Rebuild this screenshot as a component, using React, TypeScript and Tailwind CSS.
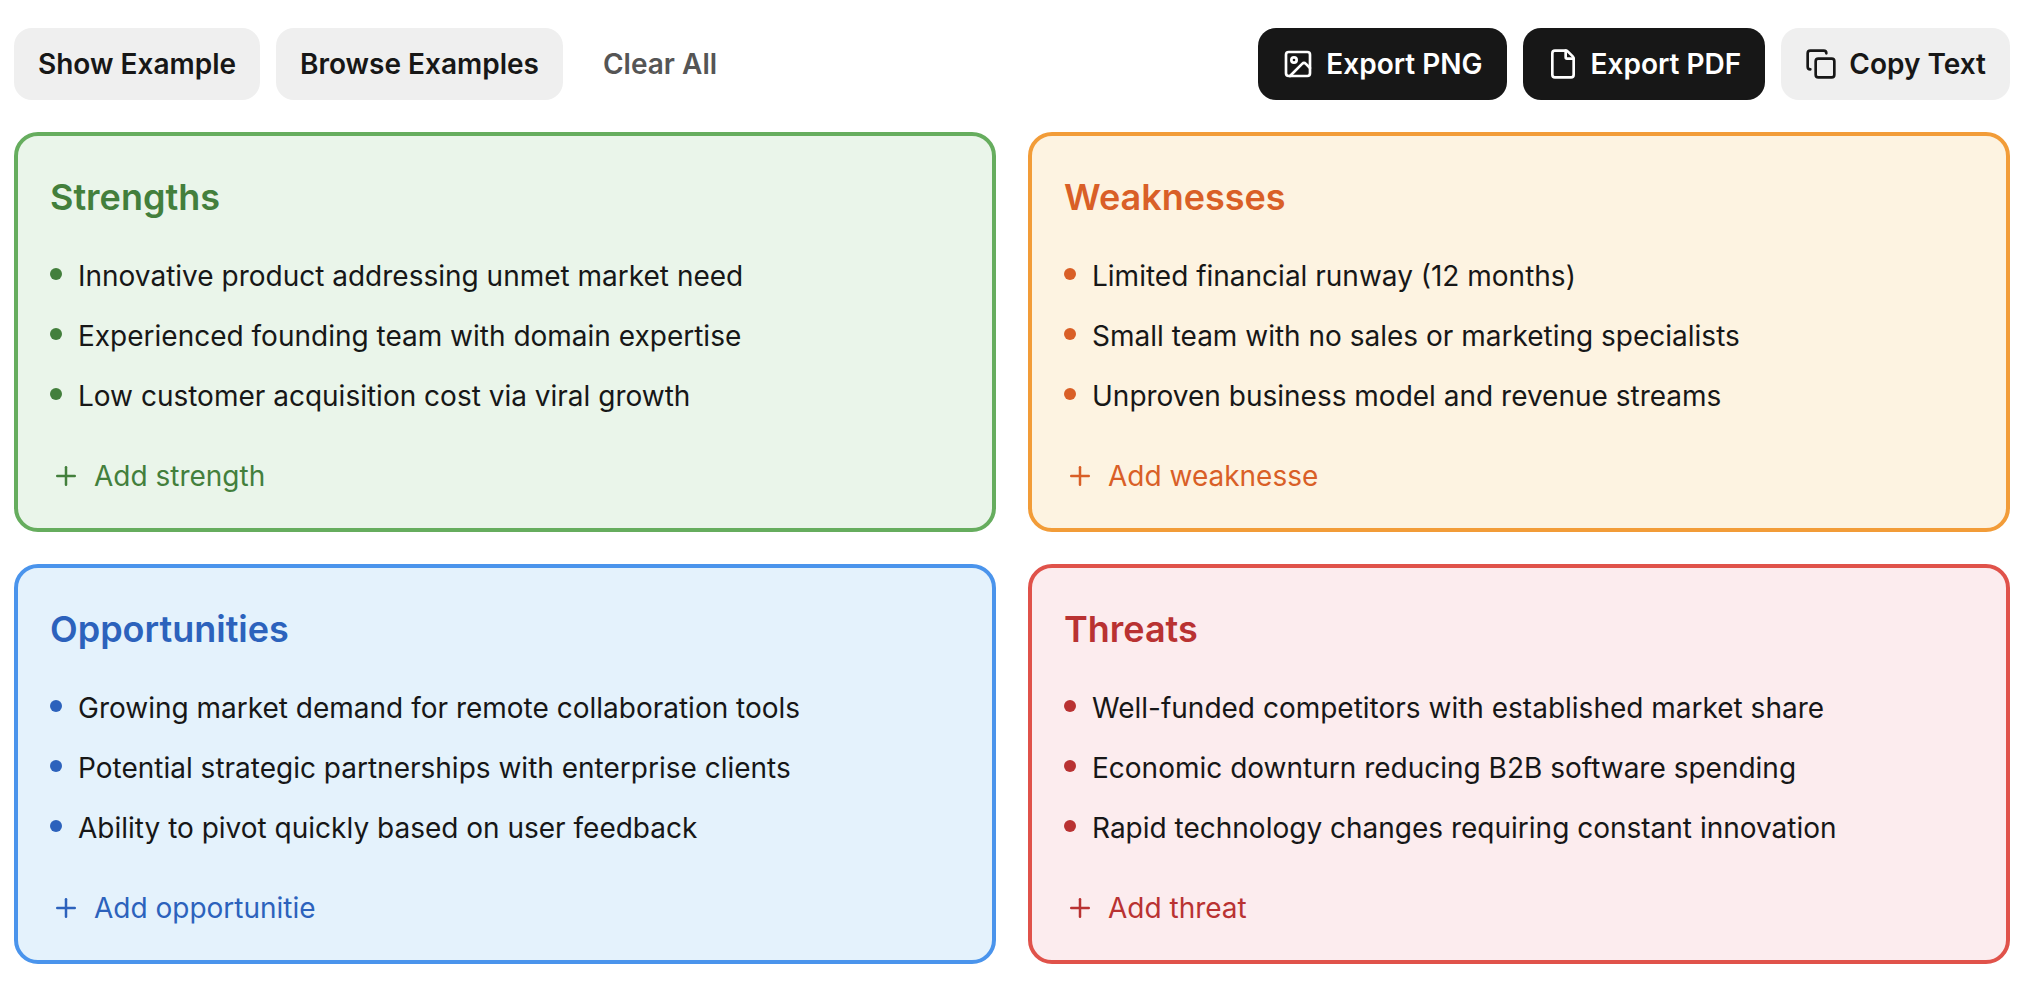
import { Copy, File, Image, Plus } from "lucide-react";

const quadrants = [
  {
    title: "Strengths",
    add: "Add strength",
    box: "border-[#66ad5e] bg-[#eaf5ea]",
    text: "text-[#437f3c]",
    dot: "bg-[#437f3c]",
    items: [
      "Innovative product addressing unmet market need",
      "Experienced founding team with domain expertise",
      "Low customer acquisition cost via viral growth",
    ],
  },
  {
    title: "Weaknesses",
    add: "Add weaknesse",
    box: "border-[#f29c38] bg-[#fdf3e1]",
    text: "text-[#d95f27]",
    dot: "bg-[#d95f27]",
    items: [
      "Limited financial runway (12 months)",
      "Small team with no sales or marketing specialists",
      "Unproven business model and revenue streams",
    ],
  },
  {
    title: "Opportunities",
    add: "Add opportunitie",
    box: "border-[#4a94ec] bg-[#e4f2fc]",
    text: "text-[#2c62bc]",
    dot: "bg-[#2c62bc]",
    items: [
      "Growing market demand for remote collaboration tools",
      "Potential strategic partnerships with enterprise clients",
      "Ability to pivot quickly based on user feedback",
    ],
  },
  {
    title: "Threats",
    add: "Add threat",
    box: "border-[#e0524a] bg-[#fcecee]",
    text: "text-[#b93232]",
    dot: "bg-[#b93232]",
    items: [
      "Well-funded competitors with established market share",
      "Economic downturn reducing B2B software spending",
      "Rapid technology changes requiring constant innovation",
    ],
  },
];

const grayBtn = "h-[72px] px-6 rounded-[18px] bg-[#efefef] text-[#171717] font-semibold flex items-center gap-3";
const darkBtn = "h-[72px] px-6 rounded-[18px] bg-[#171717] text-white font-semibold flex items-center gap-3";

export default function App() {
  return (
    <div className="min-h-screen bg-white pl-[14px] pr-[26px] pt-7 text-[28px] font-['Inter',sans-serif] text-[#171717]">
      <div className="flex items-center justify-between mb-8">
        <div className="flex items-center gap-4">
          <button className={grayBtn}>Show Example</button>
          <button className={grayBtn}>Browse Examples</button>
          <button className="h-[72px] px-6 rounded-[18px] text-[#555555] font-semibold">Clear All</button>
        </div>
        <div className="flex items-center gap-4">
          <button className={darkBtn}>
            <Image className="w-8 h-8" strokeWidth={2} />
            Export PNG
          </button>
          <button className={darkBtn}>
            <File className="w-8 h-8" strokeWidth={2} />
            Export PDF
          </button>
          <button className={grayBtn}>
            <Copy className="w-8 h-8" strokeWidth={2} />
            Copy Text
          </button>
        </div>
      </div>

      <div className="grid grid-cols-2 gap-8">
        {quadrants.map((q) => (
          <div key={q.title} className={`h-[400px] border-4 rounded-[24px] px-8 pt-[37px] ${q.box}`}>
            <h2 className={`text-[36px] font-semibold leading-[48px] mb-[34px] font-['Inter',sans-serif] ${q.text}`}>{q.title}</h2>
            <ul className="flex flex-col gap-[18px]">
              {q.items.map((item) => (
                <li key={item} className="flex items-center gap-4 leading-[42px]">
                  <span className={`w-3 h-3 rounded-full shrink-0 -mt-1 ${q.dot}`} />
                  {item}
                </li>
              ))}
            </ul>
            <button className={`mt-[38px] ml-px flex items-center gap-[13px] leading-[42px] ${q.text}`}>
              <Plus className="w-[30px] h-[30px]" strokeWidth={2} />
              {q.add}
            </button>
          </div>
        ))}
      </div>
    </div>
  );
}
